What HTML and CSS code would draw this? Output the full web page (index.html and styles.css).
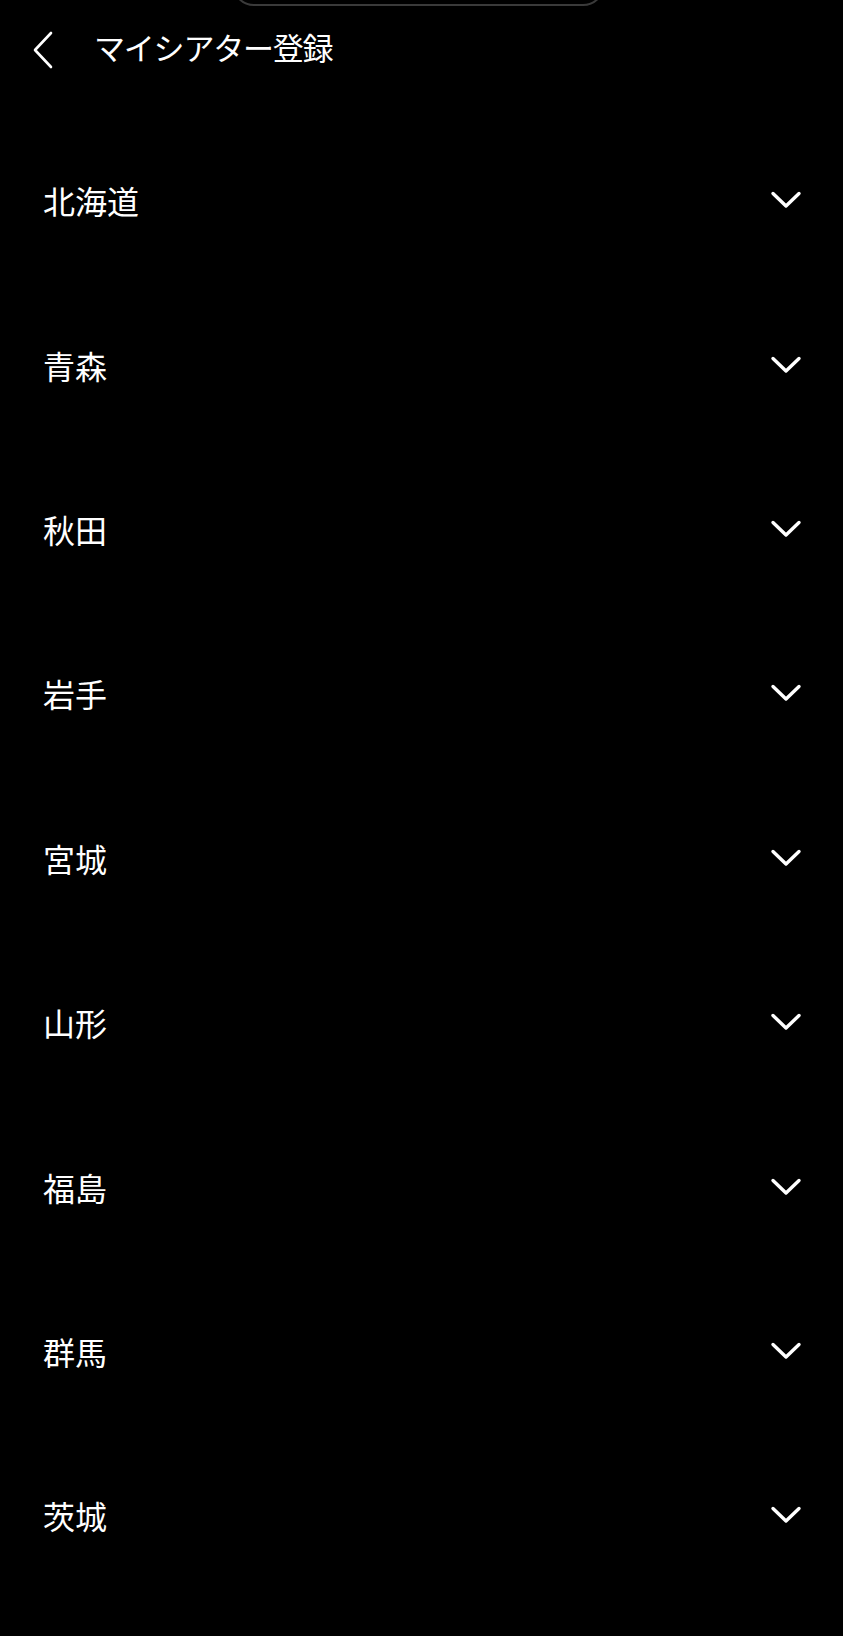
FILE: index.html
```html
<!DOCTYPE html>
<html lang="ja">
<head>
<meta charset="utf-8">
<title>マイシアター登録</title>
<link rel="stylesheet" href="styles.css">
</head>
<body>
<div class="screen">
  <div class="notch"></div>
  <header class="header">
    <svg class="back" width="22" height="38" viewBox="0 0 22 38" aria-hidden="true"><path d="M19 2 L3 19 L19 36" fill="none" stroke="#fff" stroke-width="2.6" stroke-linecap="round" stroke-linejoin="round"/></svg>
    <h1 class="title">マイシアター登録</h1>
  </header>
  <ul class="list">
    <li class="row"><span class="name">北海道</span><svg class="chev" width="32" height="20" viewBox="0 0 32 20"><path d="M3 3.5 L16 16 L29 3.5" fill="none" stroke="#fff" stroke-width="3.4" stroke-linecap="round" stroke-linejoin="round"/></svg></li>
    <li class="row"><span class="name">青森</span><svg class="chev" width="32" height="20" viewBox="0 0 32 20"><path d="M3 3.5 L16 16 L29 3.5" fill="none" stroke="#fff" stroke-width="3.4" stroke-linecap="round" stroke-linejoin="round"/></svg></li>
    <li class="row"><span class="name">秋田</span><svg class="chev" width="32" height="20" viewBox="0 0 32 20"><path d="M3 3.5 L16 16 L29 3.5" fill="none" stroke="#fff" stroke-width="3.4" stroke-linecap="round" stroke-linejoin="round"/></svg></li>
    <li class="row"><span class="name">岩手</span><svg class="chev" width="32" height="20" viewBox="0 0 32 20"><path d="M3 3.5 L16 16 L29 3.5" fill="none" stroke="#fff" stroke-width="3.4" stroke-linecap="round" stroke-linejoin="round"/></svg></li>
    <li class="row"><span class="name">宮城</span><svg class="chev" width="32" height="20" viewBox="0 0 32 20"><path d="M3 3.5 L16 16 L29 3.5" fill="none" stroke="#fff" stroke-width="3.4" stroke-linecap="round" stroke-linejoin="round"/></svg></li>
    <li class="row"><span class="name">山形</span><svg class="chev" width="32" height="20" viewBox="0 0 32 20"><path d="M3 3.5 L16 16 L29 3.5" fill="none" stroke="#fff" stroke-width="3.4" stroke-linecap="round" stroke-linejoin="round"/></svg></li>
    <li class="row"><span class="name">福島</span><svg class="chev" width="32" height="20" viewBox="0 0 32 20"><path d="M3 3.5 L16 16 L29 3.5" fill="none" stroke="#fff" stroke-width="3.4" stroke-linecap="round" stroke-linejoin="round"/></svg></li>
    <li class="row"><span class="name">群馬</span><svg class="chev" width="32" height="20" viewBox="0 0 32 20"><path d="M3 3.5 L16 16 L29 3.5" fill="none" stroke="#fff" stroke-width="3.4" stroke-linecap="round" stroke-linejoin="round"/></svg></li>
    <li class="row"><span class="name">茨城</span><svg class="chev" width="32" height="20" viewBox="0 0 32 20"><path d="M3 3.5 L16 16 L29 3.5" fill="none" stroke="#fff" stroke-width="3.4" stroke-linecap="round" stroke-linejoin="round"/></svg></li>
  </ul>
</div>
</body>
</html>
```

FILE: styles.css
```css
html, body {
  margin: 0;
  padding: 0;
  background: #000;
}

body {
  color: #fff;
  font-family: "Noto Sans CJK JP", "Noto Sans", sans-serif;
}

.screen {
  position: relative;
  width: 843px;
  height: 1636px;
  overflow: hidden;
  background: #000;
}

.notch {
  position: absolute;
  left: 232px;
  top: -40px;
  width: 369px;
  height: 42px;
  border: 2px solid #3a3a3a;
  border-radius: 22px;
}

.header {
  height: 96px;
  display: flex;
  align-items: center;
  padding-left: 32px;
  gap: 40px;
}

.back {
  display: block;
  margin-top: 4px;
}

.title {
  margin: 0 0 4px 0;
  font-size: 31px;
  font-weight: 400;
  line-height: 1;
  letter-spacing: -1.2px;
}

.list {
  list-style: none;
  margin: 0;
  padding: 22px 0 0 0;
}

.row {
  height: 164.4px;
  display: flex;
  align-items: center;
  justify-content: space-between;
  padding: 0 41px 0 43px;
}

.name {
  font-size: 32px;
  line-height: 1;
}

.chev {
  display: block;
}
```
